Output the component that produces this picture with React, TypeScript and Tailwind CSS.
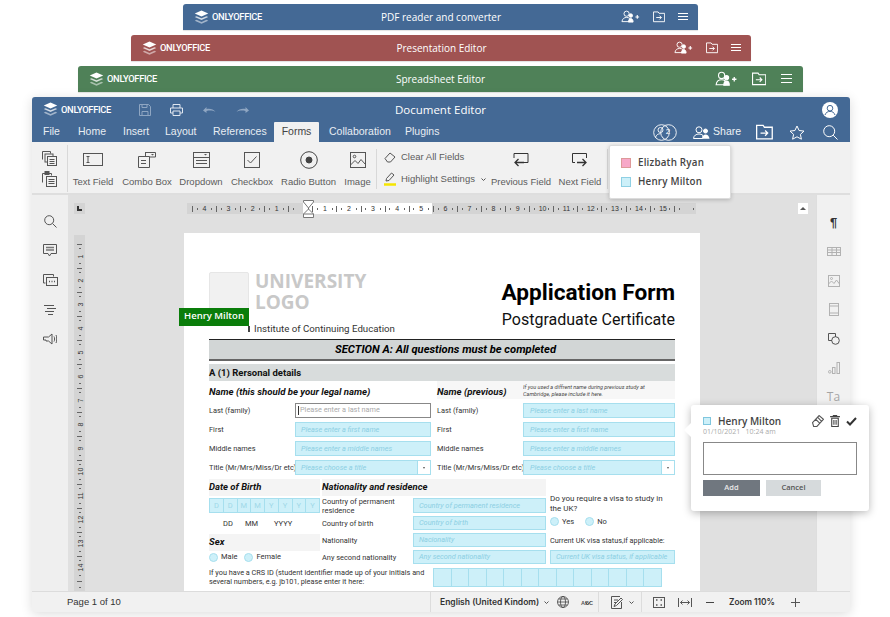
import React from "react";

const Logo = ({ w = 15 }: { w?: number }) => (
  <svg width={w} height={w * 0.95} viewBox="0 0 20 19" className="shrink-0">
    <path d="M10 13.2 1 9.4l2.4-1L10 11l6.6-2.6 2.4 1z" fill="#fff" opacity=".75" />
    <path d="M10 18.4 1 14.2l2.4-1.1L10 16l6.6-2.9 2.4 1.1z" fill="#fff" opacity=".5" />
    <path d="M10 .6 19 4.6 10 8.7 1 4.6z" fill="#fff" />
  </svg>
);

const UsersPlus = ({ s = 1 }: { s?: number }) => (
  <svg width={20 * s} height={14 * s} viewBox="0 0 20 14" fill="none" stroke="#fff" strokeWidth="1">
    <circle cx="6" cy="4" r="2.8" />
    <path d="M1 12.5c.4-3 2.4-4.5 5-4.5 1.5 0 2.6.4 3.4 1.1v3.4z" />
    <circle cx="10.5" cy="6" r="1.9" fill="#fff" />
    <path d="M8 13c0-2.5 1-3.8 2.5-3.8S13 10.5 13 13z" fill="#fff" />
    <path d="M15.5 7.5h4M17.5 5.5v4" strokeWidth="1.2" />
  </svg>
);

const FolderArrow = ({ s = 1 }: { s?: number }) => (
  <svg width={13 * s} height={12 * s} viewBox="0 0 13 12" fill="none" stroke="#fff" strokeWidth="1">
    <path d="M.5 1h5l1 1.5h6v9H.5z" />
    <path d="M3.5 7H9M7 5l2 2-2 2" />
  </svg>
);

const Menu = ({ w = 11, gap = 3 }: { w?: number; gap?: number }) => (
  <div className="flex flex-col" style={{ gap }}>
    <div className="h-px bg-white" style={{ width: w }} />
    <div className="h-px bg-white" style={{ width: w }} />
    <div className="h-px bg-white" style={{ width: w }} />
  </div>
);

const Brand = () => (
  <span className="w-[53px] text-white text-[9.3px] font-medium font-['Roboto'] tracking-[-0.3px] whitespace-nowrap">ONLYOFFICE</span>
);

const BackHeader = ({ color, ml, mr, title, iconGap, s, mw, mg, pr, mt }: { color: string; ml: string; mr: string; title: string; iconGap: string; s: number; mw: number; mg: number; pr: string; mt: string }) => (
  <div className={`${color} ${ml} ${mr} ${mt} h-[26px] rounded-t-[3px] grid grid-cols-[1fr_auto_1fr] items-center pl-[11px] ${pr} shadow-[0_1px_1px_rgba(0,0,0,0.12)]`}>
    <div className="flex items-center gap-[3px]">
      <Logo />
      <Brand />
    </div>
    <div className="text-white text-[10px] font-['Open_Sans'] pt-[1px]">{title}</div>
    <div className={`flex items-center justify-end ${iconGap}`}>
      <UsersPlus s={s} />
      <FolderArrow s={s} />
      <Menu w={mw} gap={mg} />
    </div>
  </div>
);

const G = "#555";

const TB = ({ children, label, w }: { children: React.ReactNode; label: string; w: string }) => (
  <div className={`${w} flex flex-col items-center shrink-0`}>
    <div className="h-[30px] flex items-center justify-center">{children}</div>
    <div className="text-[9.5px] text-[#5c5c5c] whitespace-nowrap leading-[12px] mt-[1px]">{label}</div>
  </div>
);

const stroke = { fill: "none", stroke: G, strokeWidth: 1 };

const CopyIcon = () => (
  <svg width="15" height="15" viewBox="0 0 15 15" {...stroke}>
    <path d="M.5 8.5V.5h8v2" />
    <rect x="3" y="3" width="8" height="8" fill="#f1f1f1" />
    <rect x="5.5" y="5.5" width="9" height="9" fill="#f1f1f1" />
    <path d="M7.5 8.5h5M7.5 10.5h5M7.5 12.5h5" />
  </svg>
);
const PasteIcon = () => (
  <svg width="15" height="16" viewBox="0 0 15 16" {...stroke}>
    <path d="M.5 11.5v-9h9v2" />
    <rect x="3" y=".5" width="4" height="3" fill={G} />
    <rect x="4.5" y="5.5" width="10" height="10" fill="#f1f1f1" />
    <path d="M6.5 8.5h6M6.5 10.5h6M6.5 12.5h6" />
  </svg>
);

const Tick = ({ v, n }: { v?: boolean; n: string }) => (
  <div className={`flex items-center justify-around shrink-0 relative ${v ? "flex-col h-[24px] w-full" : "flex-row w-[24.1px] h-full"}`}>
    <span className={`bg-[#666] ${v ? "h-px w-[5px]" : "w-px h-[6px]"}`} />
    <span className={`bg-[#666] ${v ? "h-px w-[2px]" : "w-px h-[2px]"}`} />
    <span className={`text-[7px] leading-none text-[#333] w-[6px] text-center ${v ? "-rotate-90" : ""}`}>{n}</span>
    <span className={`bg-[#666] ${v ? "h-px w-[2px]" : "w-px h-[2px]"}`} />
  </div>
);

const Field = ({ t, cls = "", sel }: { t: string; cls?: string; sel?: boolean }) => (
  <div className={`h-full flex items-center pl-[5px] bg-[#cdf0f9] border border-[#a6dfee] text-[7.3px] italic text-[#8ccfe3] leading-none overflow-hidden relative ${cls}`}>
    <span className="whitespace-nowrap">{t}</span>
    {sel && (
      <span className="absolute right-0 top-0 bottom-0 w-[13px] bg-white border-l border-[#a6dfee] flex items-center justify-center">
        <span className="border-x-[1.5px] border-t-[2px] border-x-transparent border-t-[#555]" />
      </span>
    )}
  </div>
);

const Lbl = ({ children, cls = "" }: { children: React.ReactNode; cls?: string }) => (
  <div className={`text-[7.4px] leading-[10px] text-[#333] flex items-center whitespace-nowrap ${cls}`}>{children}</div>
);

const Radio = ({ t }: { t: string }) => (
  <div className="flex items-center gap-[3px] text-[7.5px] text-[#333] leading-none">
    <span className="w-[9px] h-[9px] rounded-full bg-[#cdf0f9] border border-[#a6dfee]" />
    {t}
  </div>
);

const SideIcon = ({ children, dim }: { children: React.ReactNode; dim?: boolean }) => (
  <div className={`h-[29px] flex items-center justify-center ${dim ? "opacity-40" : ""}`}>{children}</div>
);

const H = ({ children }: { children: React.ReactNode }) => (
  <div className="h-[17px] bg-[#f4f4f4] text-[9.5px] font-bold italic text-[#111] flex items-center whitespace-nowrap">{children}</div>
);

export default function App() {
  return (
    <div className="w-[890px] h-[617px] bg-white overflow-hidden relative font-['Liberation_Sans',sans-serif]">
      <div className="pt-[4px]">
        <BackHeader color="bg-[#446995]" ml="ml-[183px]" mr="mr-[192px]" mt="" title="PDF reader and converter" iconGap="gap-[13px]" s={0.93} mw={10} mg={2} pr="pr-[10px]" />
        <BackHeader color="bg-[#a05352]" ml="ml-[131px]" mr="mr-[139px]" mt="mt-[5px]" title="Presentation Editor" iconGap="gap-[13px]" s={0.93} mw={10} mg={2} pr="pr-[10px]" />
        <BackHeader color="bg-[#4f8158]" ml="ml-[78px]" mr="mr-[87px]" mt="mt-[5px]" title="Spreadsheet Editor" iconGap="gap-[15px]" s={1.1} mw={11} mg={3} pr="pr-[11px]" />
      </div>

      {/* main window */}
      <div className="ml-[32px] w-[818px] h-[515px] mt-[5px] rounded-[3px] flex flex-col shadow-[0_2px_12px_rgba(0,0,0,0.14)] relative bg-[#f1f1f1]">
        <div className="bg-[#446995] rounded-t-[3px] h-[45px] shrink-0 flex flex-col text-white">
          <div className="h-[25px] grid grid-cols-[1fr_auto_1fr] items-center pl-[11px] pr-[12px]">
            <div className="flex items-center">
              <Logo />
              <span className="ml-[3px] flex"><Brand /></span>
              <div className="ml-[25px] flex items-center gap-[19px]">
                <svg width="12" height="12" viewBox="0 0 12 12" fill="none" stroke="#8fa6c2"><path d="M.5.5h9l2 2v9H.5z" /><path d="M3 .5v3h5v-3M3 11.5v-4h6v4" /></svg>
                <svg width="13" height="12" viewBox="0 0 13 12" fill="none" stroke="#dfe6ef"><path d="M3 4V.5h7V4M3 9H.5V4h12v5H10" /><path d="M3 7h7v4.5H3z" /></svg>
                <svg width="13" height="7" viewBox="0 0 13 7" className="ml-[1px]"><path d="M0 4.5 3.5 1v2C7 2.5 10.5 3 12.5 6 10 4.5 7 4.300 3.5 5v2z" fill="#8fa6c2" /></svg>
                <svg width="13" height="7" viewBox="0 0 13 7" className="ml-[1px]"><path d="M13 4.5 9.5 1v2C6 2.5 2.5 3 .5 6 3 4.5 6 4.300 9.5 5v2z" fill="#8fa6c2" /></svg>
              </div>
            </div>
            <div className="text-[11.5px] font-['Open_Sans']">Document Editor</div>
            <div className="flex justify-end">
              <svg width="16" height="16" viewBox="0 0 16 16"><circle cx="8" cy="8" r="8" fill="#fff" /><circle cx="8" cy="6.2" r="2.8" fill="none" stroke="#446995" /><path d="M3 13c.8-2.5 2.7-3.6 5-3.6s4.200 1.100 5 3.600" fill="none" stroke="#446995" /></svg>
            </div>
          </div>
          <div className="h-[20px] flex items-end text-[10.5px] relative">
            <div className="flex items-center h-[20px] pl-[11px] text-[#e8edf3]">
              <span className="w-[35px]">File</span>
              <span className="w-[45px]">Home</span>
              <span className="w-[42px]">Insert</span>
              <span className="w-[48px]">Layout</span>
              <span className="w-[61px]">References</span>
              <span className="w-[45px] h-[20px] bg-[#f1f1f1] rounded-t-[1px] text-[#444] flex items-center justify-center">Forms</span>
              <span className="w-[86px] pl-[10px]">Collaboration</span>
              <span>Plugins</span>
            </div>
            <div className="ml-auto flex items-center h-[20px] pr-[12px] -mt-[3px]">
              <svg width="24" height="17" viewBox="0 0 24 17" fill="none" stroke="#fff" strokeWidth=".9"><circle cx="8.5" cy="8.5" r="7.8" /><circle cx="15.5" cy="8.5" r="7.8" /><circle cx="7.5" cy="6" r="2.5" /><path d="M2.5 13.5c.5-2.5 2.5-3.800 5-3.800" /></svg>
              <span className="-ml-[15px] w-[12px] text-[8px] text-white text-center">2</span>
              <svg className="ml-[19px]" width="17" height="13" viewBox="0 0 17 13" fill="none" stroke="#fff"><circle cx="6" cy="3.8" r="3" /><path d="M.5 12.5c.3-3 2.5-4.500 5.500-4.500 1.500 0 2.800.4 3.800 1.200v3.300z" /><circle cx="12.5" cy="5" r="2" fill="#fff" /><path d="M9.5 12.8c0-2.800 1.300-4.300 3-4.300s3.800 1.500 4 4.300z" fill="#fff" stroke="none" /></svg>
              <span className="ml-[3px] text-[10.5px] text-[#eef2f6]">Share</span>
              <span className="ml-[15px]"><FolderArrow s={1.3} /></span>
              <svg className="ml-[16px]" width="16" height="15" viewBox="0 0 16 15" fill="none" stroke="#fff"><path d="m8 1 2.100 4.500 4.900.6-3.600 3.300 1 4.800L8 11.800l-4.400 2.400 1-4.800L1 6.100l4.900-.6z" /></svg>
              <svg className="ml-[18px]" width="15" height="15" viewBox="0 0 15 15" fill="none" stroke="#fff"><circle cx="6.2" cy="6.2" r="5.5" /><path d="m10.200 10.200 4.300 4.300" /></svg>
            </div>
          </div>
        </div>

        {/* toolbar */}
        <div className="h-[53px] shrink-0 border-b-2 border-[#dedede] flex items-start pt-[3px] bg-[#f1f1f1]">
          <div className="w-[36px] h-[47px] flex flex-col items-center justify-center gap-[5px] border-r border-[#d8d8d8]">
            <CopyIcon />
            <PasteIcon />
          </div>
          <div className="flex items-start">
            <TB label="Text Field" w="w-[50px]">
              <svg width="20" height="14" viewBox="0 0 20 14" {...stroke}><rect x=".5" y=".5" width="19" height="12" /><path d="M3.5 3.5h3M3.5 9.5h3M5 3.5v6" /></svg>
            </TB>
            <TB label="Combo Box" w="w-[58px]">
              <svg width="18" height="16" viewBox="0 0 18 16" {...stroke}><path d="M.5 4.5h11v11H.5zM7 .5h10.500v4.500H11.500" /><path d="M7.5.5v4" /><path d="m13 2 1.500 1.500L16 2z" fill={G} stroke="none" /><path d="M3 8.500h5M3 11.500h5" /></svg>
            </TB>
            <TB label="Dropdown" w="w-[50px]">
              <svg width="17" height="16" viewBox="0 0 17 16" {...stroke}><rect x=".5" y=".5" width="16" height="15" /><path d="M.5 5.5h16M3 8.5h11M3 11.5h11" /><path d="m11 2 1.500 1.500L14 2z" fill={G} stroke="none" /></svg>
            </TB>
            <TB label="Checkbox" w="w-[52px]">
              <svg width="16" height="16" viewBox="0 0 16 16" {...stroke}><rect x=".5" y=".5" width="15" height="15" /><path d="m3.5 8 3 3 6-6.500" /></svg>
            </TB>
            <TB label="Radio Button" w="w-[61px]">
              <svg width="18" height="18" viewBox="0 0 18 18" fill="none" stroke="#444"><circle cx="9" cy="9" r="8.3" /><circle cx="9" cy="9" r="3" fill="#444" /></svg>
            </TB>
            <TB label="Image" w="w-[37px]">
              <svg width="16" height="16" viewBox="0 0 16 16" {...stroke}><rect x=".5" y=".5" width="15" height="15" /><circle cx="4.5" cy="4.5" r="1.3" /><path d="m.5 13 4.500-4.500 3 3 3-4 4.500 5" /></svg>
            </TB>
          </div>
          <div className="w-px h-[40px] bg-[#d8d8d8] mt-[4px]" />
          <div className="flex flex-col w-[113px] pl-[7px] pt-[5px] gap-[8px] text-[9.5px] text-[#5c5c5c] leading-[14px]">
            <div className="flex items-center gap-[5px] whitespace-nowrap">
              <svg width="12" height="11" viewBox="0 0 12 11" {...stroke}><path d="m1 6.5 5-5.500 5 4-4.500 5H3.500z" /></svg>
              Clear All Fields
            </div>
            <div className="flex items-center gap-[5px] whitespace-nowrap">
              <svg width="12" height="14" viewBox="0 0 12 14" {...stroke}><path d="m2 9 .5-2.500L7.500 1 10 3 5 8.500z" /><path d="M0 12.5h12" stroke="#f5e500" strokeWidth="2.5" /></svg>
              <span>Highlight Settings</span>
              <svg width="5" height="3" viewBox="0 0 5 3" className="ml-[1px]" {...stroke}><path d="m.5.5 2 2 2-2" /></svg>
            </div>
          </div>
          <div className="flex items-start">
            <TB label="Previous Field" w="w-[62px]">
              <svg width="16" height="14" viewBox="0 0 16 14" fill="none" stroke="#333"><path d="M1 5V.5h14v9H9" /><path d="M11 9.5H2M5.5 6 2 9.5 5.5 13" strokeWidth="1.3" /></svg>
            </TB>
            <TB label="Next Field" w="w-[54px] ml-[1px]">
              <svg width="16" height="14" viewBox="0 0 16 14" fill="none" stroke="#333"><path d="M3 9.5H.5v-9h14V5" /><path d="M5 9.5h9M10.5 6 14 9.5 10.500 13" strokeWidth="1.3" /></svg>
            </TB>
          </div>
          <div className="w-px h-[40px] bg-[#d8d8d8] mt-[4px]" />
        </div>

        {/* body */}
        <div className="flex-1 min-h-0 flex">
          <div className="w-[36px] shrink-0 bg-[#efefef] flex flex-col pt-[12px]">
            <SideIcon><svg width="13" height="13" viewBox="0 0 13 13" {...stroke}><circle cx="5.2" cy="5.2" r="4.5" /><path d="m8.5 8.5 4 4" /></svg></SideIcon>
            <SideIcon><svg width="14" height="13" viewBox="0 0 14 13" {...stroke}><path d="M.5.5h13v9H8L6.500 12 5 9.500H.5z" /><path d="M3 3.5h8M3 6h8" stroke="#777" strokeWidth="1.4" /></svg></SideIcon>
            <div className="h-[30px] flex items-center justify-center"><svg width="15" height="13" viewBox="0 0 15 13" {...stroke}><path d="M2.5 9H.5V.5h10v2" /><rect x="3.5" y="3.5" width="11" height="8" /><path d="M6 7.5h1M8.5 7.5h1M11 7.5h1" strokeWidth="1.5" /></svg></div>
            <SideIcon><svg width="12" height="10" viewBox="0 0 12 10" {...stroke}><path d="M0 .5h10M3 3.5h9M1 6.5h9M4 9.5h5" /></svg></SideIcon>
            <SideIcon><svg width="14" height="12" viewBox="0 0 14 12" {...stroke}><path d="M.5 4h5L9 1v10L5.500 8H3V7H.5zM11 3.500c.8.700.8 4.300 0 5M13 2c1 1.500 1 6.500 0 8" /></svg></SideIcon>
          </div>

          <div className="flex-1 min-w-0 bg-[#e0e0e0] flex flex-col relative">
            <div className="h-[38px] shrink-0 flex items-start pt-[8px] relative">
              <div className="ml-[6px] w-[11px] h-[11px] bg-[#d4d4d4] flex items-center justify-center">
                <span className="w-[5px] h-[5px] border-l-2 border-b-2 border-[#333]" />
              </div>
              <div className="ml-[102px] w-[509px] h-[11px] bg-[#d4d4d4] flex relative pl-[3px] overflow-visible">
                <div className="absolute left-[116px] top-0 h-full w-[129px] bg-white" />
                {["4", "3", "2", "1", "", "1", "2", "3", "4", "5", "6", "7", "8", "9", "10", "11", "12", "13", "14", "15", ""].map((n, i) => <Tick key={i} n={n} />)}
                <svg className="absolute left-[116px] -top-[3px]" width="11" height="18" viewBox="0 0 11 18" fill="#fff" stroke="#777"><path d="M.5.5h10V2L5.5 8 .5 2z" /><path d="M5.5 9 10.5 14v3.500H.5V14z" /><path d="M.5 14h10" /></svg>
              </div>
              <div className="ml-[102px] w-[10px] h-[11px] bg-white flex items-center justify-center">
                <span className="border-x-[3px] border-b-[3px] border-x-transparent border-b-[#555]" />
              </div>
            </div>
            <div className="flex-1 min-h-0 flex overflow-hidden">
              <div className="ml-[6px] w-[11px] h-full mt-[2px] bg-[#d4d4d4] flex flex-col overflow-hidden shrink-0 pt-[7px]">
                {["1", "2", "3", "4", "5", "6", "7", "8", "9", "10", "11", "12", "13", "14", ""].map((n, i) => <Tick v key={i} n={n} />)}
              </div>
              {/* page */}
              <div className="ml-[99px] w-[516px] h-full bg-white shrink-0 px-[25px] pt-[39px] font-['Roboto',sans-serif] overflow-hidden">
                <div className="h-[67px] flex">
                  <div className="w-[40px] h-[50px] bg-[#f1f1f1] border border-[#e6e6e6] rounded-[2px] shrink-0" />
                  <div className="ml-[6px] flex-1">
                    <div className="text-[19px] leading-[20.5px] font-bold text-[#c8c8c8] font-['Open_Sans'] -mt-px">UNIVERSITY<br />LOGO</div>
                    <div className="text-[9.7px] leading-[12px] text-[#333] mt-[11px] -ml-px">Institute of Continuing Education</div>
                  </div>
                  <div className="text-right">
                    <div className="text-[22.6px] leading-[28px] font-bold text-black mt-[7px]">Application Form</div>
                    <div className="text-[16px] leading-[20px] text-[#111] mt-[3px]">Postgraduate Certificate</div>
                  </div>
                </div>
                <div className="h-[22px] border-t border-b-2 border-t-[#222] border-b-[#666] bg-[#d2d6d6] flex items-center justify-center pl-[7px] pt-[2px] text-[11.2px] font-bold italic text-black">
                  SECTION A: All questions must be completed
                </div>
                <div className="mt-[3px] h-[17px] bg-[#d8dcdc] flex items-center pt-[1px] text-[9.5px] font-bold text-[#111]">A (1) Rersonal details</div>
                <div className="grid grid-cols-[86px_136px_6px_86px_152px] grid-rows-[18px_15px_15px_15px_15px] gap-y-[4px]">
                  <div className="col-span-2 text-[9.6px] font-bold italic text-[#111] flex items-center pt-[4px] whitespace-nowrap">Name (this should be your legal name)</div>
                  <div />
                  <div className="text-[9.6px] font-bold italic text-[#111] flex items-center pt-[4px] whitespace-nowrap bg-[#f7f7f7]">Name (previous)</div>
                  <div className="text-[5.5px] italic leading-[7px] text-[#444] flex items-start pt-[3px] bg-[#f7f7f7] overflow-hidden pr-[20px]">If you used a diffrent name during previous study at Cambridge, please include it here.</div>

                  <Lbl>Last (family)</Lbl>
                  <div className="h-full flex items-center pl-[2px] bg-white border border-[#888] text-[7.3px] text-[#aaa]"><span className="w-px h-[9px] bg-[#333] mr-px" />Please enter a last name</div>
                  <div />
                  <Lbl>Last (family)</Lbl>
                  <Field t="Please enter a last name" cls="pl-[6px]" />

                  <Lbl>First</Lbl>
                  <Field t="Please enter a first name" />
                  <div />
                  <Lbl>First</Lbl>
                  <Field t="Please enter a first name" cls="pl-[6px]" />

                  <Lbl>Middle names</Lbl>
                  <Field t="Please enter a middle names" />
                  <div />
                  <Lbl>Middle names</Lbl>
                  <Field t="Please enter a middle names" cls="pl-[6px]" />

                  <Lbl>Title (Mr/Mrs/Miss/Dr etc)</Lbl>
                  <Field t="Please choose a title" sel />
                  <div />
                  <Lbl>Title (Mr/Mrs/Miss/Dr etc)</Lbl>
                  <Field t="Please choose a title" cls="pl-[6px]" sel />
                </div>

                <div className="flex mt-[4px]">
                  <div className="w-[111px] shrink-0">
                    <H>Date of Birth</H>
                    <div className="mt-[2px] h-[15px] flex bg-[#cdf0f9] border border-[#a6dfee]">
                      {["D", "D", "M", "M", "Y", "Y", "Y", "Y"].map((c, i) => (
                        <span key={i} className="flex-1 flex items-center justify-center text-[7.5px] text-[#9fd8e8] border-r border-[#a6dfee] last:border-r-0">{c}</span>
                      ))}
                    </div>
                    <div className="h-[21px] flex items-center pl-[14px] text-[7.5px] text-[#333]">
                      <span className="w-[22px]">DD</span>
                      <span className="w-[29px]">MM</span>
                      <span>YYYY</span>
                    </div>
                    <H>Sex</H>
                    <div className="mt-[1px] h-[10px] flex items-center gap-[7px]">
                      <Radio t="Male" />
                      <Radio t="Female" />
                    </div>
                  </div>
                  <div className="ml-[2px] w-[224px] shrink-0">
                    <H>Nationality and residence</H>
                    <div className="mt-[2px] grid grid-cols-[91px_133px] grid-rows-[15px_14px_14px_14px] gap-y-[3px]">
                      <div className="text-[7.5px] leading-[9px] text-[#333] flex items-center">Country of permanent residence</div>
                      <Field t="Country of permanent residence" />
                      <Lbl cls="pt-[1px]">Country of birth</Lbl>
                      <Field t="Country of birth" />
                      <Lbl cls="pt-[1px]">Nationality</Lbl>
                      <Field t="Nacionality" />
                      <Lbl cls="pt-[1px]">Any second nationality</Lbl>
                      <Field t="Any second nationality" />
                    </div>
                  </div>
                  <div className="ml-[4px] w-[125px] shrink-0 pt-[15px]">
                    <div className="text-[8px] leading-[10px] text-[#333]">Do you require a visa to study in the UK?</div>
                    <div className="mt-[2px] h-[11px] flex items-center gap-[11px]">
                      <Radio t="Yes" />
                      <Radio t="No" />
                    </div>
                    <div className="mt-[9px] h-[10px] text-[7.3px] leading-[10px] text-[#333] whitespace-nowrap">Current UK visa status,if applicable:</div>
                    <div className="mt-[4px] h-[14px]"><Field t="Current UK visa status, if applicable" /></div>
                  </div>
                </div>

                <div className="flex mt-[3px] items-start">
                  <div className="w-[224px] shrink-0 text-[7.3px] leading-[9px] text-[#333] pt-[1px]">If you have a CRS ID (student identifier made up of your initials and several numbers, e.g. jb101, please enter it here:</div>
                  <div className="w-[229px] h-[19px] mt-[1px] flex bg-[#cdf0f9] border border-[#a6dfee]">
                    {Array.from({ length: 13 }).map((_, i) => (
                      <span key={i} className="flex-1 border-r border-[#a6dfee] last:border-r-0" />
                    ))}
                  </div>
                </div>
              </div>
            </div>
          </div>

          <div className="w-[34px] shrink-0 bg-[#f1f1f1] border-l border-[#dedede] flex flex-col pt-[13px]">
            <SideIcon><span className="text-[13px] font-bold text-[#333] leading-none">¶</span></SideIcon>
            <SideIcon dim><svg width="14" height="9" viewBox="0 0 14 9" {...stroke}><rect x=".5" y=".5" width="13" height="8" /><path d="M.5 3h13M.5 5.5h13M5 .5v8M9.500.5v8" /></svg></SideIcon>
            <SideIcon dim><svg width="12" height="12" viewBox="0 0 12 12" {...stroke}><rect x=".5" y=".5" width="11" height="11" /><circle cx="3.5" cy="3.5" r="1" /><path d="m.5 9 3-3 2.500 2.500L8.500 5l3 4" /></svg></SideIcon>
            <SideIcon dim><svg width="10" height="13" viewBox="0 0 10 13" {...stroke}><rect x=".5" y=".5" width="9" height="12" /><path d="M.5 3h9M.5 10h9" /></svg></SideIcon>
            <SideIcon><svg width="12" height="12" viewBox="0 0 12 12" {...stroke}><path d="M4 7.5H.5V.5h7V4" /><circle cx="7.5" cy="7.5" r="3.8" /></svg></SideIcon>
            <SideIcon dim><svg width="12" height="12" viewBox="0 0 12 12" {...stroke}><circle cx="1.8" cy="9.8" r="1.3" /><rect x="4.5" y="5.5" width="2.5" height="6" /><rect x="9" y=".5" width="2.5" height="11" /></svg></SideIcon>
            <SideIcon dim><span className="text-[12px] text-[#333] leading-none font-['Open_Sans']">Ta</span></SideIcon>
          </div>
        </div>

        {/* status */}
        <div className="h-[21px] shrink-0 bg-[#f1f1f1] border-t border-[#dcdcdc] rounded-b-[3px] flex items-center text-[9.5px] text-[#333] relative">
          <span className="ml-[35px] w-[363px]">Page 1 of 10</span>
          <div className="w-px h-[20px] bg-[#dcdcdc]" />
          <span className="ml-[9px] font-['Inter'] font-semibold text-[8.5px] text-[#333] whitespace-nowrap w-[98px]">English (United Kindom)</span>
          <svg className="ml-[6px]" width="5" height="3" viewBox="0 0 5 3" {...stroke}><path d="m.5.5 2 2 2-2" /></svg>
          <svg className="ml-[8px]" width="12" height="12" viewBox="0 0 12 12" fill="none" stroke="#444" strokeWidth=".8"><circle cx="6" cy="6" r="5.5" /><ellipse cx="6" cy="6" rx="2.5" ry="5.5" /><path d="M.5 6h11M1.5 3h9M1.5 9h9" /></svg>
          <span className="ml-[12px] relative w-[13px] h-[12px] -mt-[3px]">
            <span className="text-[5.5px] font-semibold text-[#555] leading-none">ABC</span>
            <svg className="absolute left-[4px] top-[6px]" width="6" height="5" viewBox="0 0 6 5" {...stroke}><path d="m.5 1 2 3 3-3.500" /></svg>
          </span>
          <div className="w-px h-[20px] bg-[#dcdcdc] ml-[4px]" />
          <svg className="ml-[12px]" width="13" height="13" viewBox="0 0 13 13" {...stroke}><path d="M10.5 6v6.500H.5V.5H9" /><path d="M3 4h4M3 6.5h2M3 10.500 4 8l6-6 1.500 1.500-6 6z" /></svg>
          <svg className="ml-[5px]" width="5" height="3" viewBox="0 0 5 3" {...stroke}><path d="m.5.5 2 2 2-2" /></svg>
          <div className="w-px h-[20px] bg-[#dcdcdc] ml-[7px]" />
          <svg className="ml-[11px]" width="12" height="11" viewBox="0 0 12 11" {...stroke}><rect x=".5" y=".5" width="11" height="10" /><path d="M3 3h1.500M7.500 3H9M3 8h1.500M7.500 8H9" strokeWidth="1.3" /></svg>
          <svg className="ml-[13px]" width="14" height="9" viewBox="0 0 14 9" {...stroke}><path d="M.5 0v9M13.5 0v9M2.500 4.500h9M4.500 2.500l-2 2 2 2M9.500 2.500l2 2-2 2" /></svg>
          <div className="ml-[14px] w-[8px] h-px bg-[#444]" />
          <span className="ml-[15px] font-['Inter'] font-semibold text-[8.3px] whitespace-nowrap w-[46px]">Zoom 110%</span>
          <svg className="ml-[16px]" width="9" height="9" viewBox="0 0 9 9" {...stroke}><path d="M0 4.500h9M4.500 0v9" /></svg>
        </div>

        {/* user popup */}
        <div className="absolute left-[577px] top-[48px] w-[122px] h-[54px] bg-white border border-[#dcdcdc] rounded-[2px] shadow-[0_1px_4px_rgba(0,0,0,0.2)] pl-[11px] pt-[11px] flex flex-col gap-[7px] font-['Open_Sans'] text-[9.8px] font-semibold text-[#444] tracking-[0.2px]">
          <div className="flex items-center gap-[7px] leading-[12px]"><span className="w-[10px] h-[10px] bg-[#f7a8c8] border border-[#d99]" />Elizbath Ryan</div>
          <div className="flex items-center gap-[7px] leading-[12px]"><span className="w-[10px] h-[10px] bg-[#cdf0f9] border border-[#8fd0e4]" />Henry Milton</div>
        </div>

        {/* name flag */}
        <div className="absolute left-[147px] top-[211px] w-[70px] h-[18px] bg-[#0a7d0a] text-white text-[9.5px] font-semibold font-['Open_Sans'] flex items-center justify-center pb-[1px]">Henry Milton</div>
        <div className="absolute left-[216px] top-[229px] w-[2px] h-[6px] bg-[#444]" />

        {/* comment popup */}
        <div className="absolute left-[659px] top-[308px] w-[178px] h-[106px] bg-white rounded-[3px] shadow-[0_2px_8px_rgba(0,0,0,0.28)] px-[12px] pt-[9px] font-['Open_Sans']">
          <div className="absolute -left-[5px] top-[20px] w-[10px] h-[10px] rotate-45 bg-white" />
          <div className="flex items-center relative">
            <span className="w-[8px] h-[8px] bg-[#cdf0f9] border border-[#7fc6de]" />
            <span className="ml-[7px] text-[10px] font-semibold text-[#444] leading-[14px]">Henry Milton</span>
            <div className="ml-auto flex items-center gap-[6px]">
              <svg width="12" height="12" viewBox="0 0 11 11" {...stroke}><path d="m.5 7 6-6.500L10.500 4 4.500 10.500H1.500zM3.500 4 7 7.500M5.500 2.500 9 6" /></svg>
              <svg width="10" height="12" viewBox="0 0 9 11" fill="none" stroke="#444"><path d="M1.500 3h6v7.500h-6zM0 1.500h9M3 1.500V.5h3v1M3.500 4.500V9M5.500 4.500V9" /></svg>
              <svg width="11" height="9" viewBox="0 0 11 9" fill="none" stroke="#333" strokeWidth="2"><path d="m1 4.500 3 3 6-6.500" /></svg>
            </div>
          </div>
          <div className="text-[7px] text-[#aaa] leading-[10px] -mt-px">01/10/2021&nbsp;&nbsp;&nbsp;10:24 am</div>
          <div className="mt-[5px] w-[154px] h-[33px] border border-[#888] bg-white" />
          <div className="mt-[5px] flex items-center gap-[6px] text-[7.5px] font-semibold">
            <div className="w-[57px] h-[16px] bg-[#70777f] text-[#e8e8e8] flex items-center justify-center">Add</div>
            <div className="w-[55px] h-[16px] bg-[#d6dadc] text-[#555] flex items-center justify-center">Cancel</div>
          </div>
        </div>
      </div>
    </div>
  );
}
